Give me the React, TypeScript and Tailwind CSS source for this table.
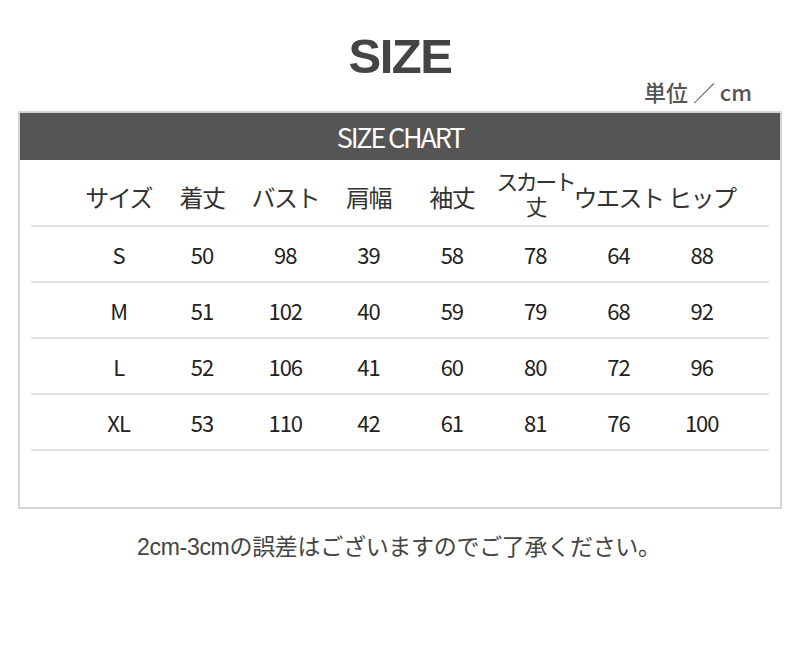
const headers = ['サイズ', '着丈', 'バスト', '肩幅', '袖丈', 'スカート丈', 'ウエスト', 'ヒップ'];

const rows = [
  ['S', '50', '98', '39', '58', '78', '64', '88'],
  ['M', '51', '102', '40', '59', '79', '68', '92'],
  ['L', '52', '106', '41', '60', '80', '72', '96'],
  ['XL', '53', '110', '42', '61', '81', '76', '100'],
];

export default function App() {
  return (
    <div className="w-[800px] h-[646px] bg-white text-[#444] font-['Liberation_Sans','Noto_Sans_CJK_JP',sans-serif]">
      {/* title */}
      <div className="pt-[28px] flex justify-center">
        <h1 className="text-[49px] font-bold leading-[56px] text-[#444] tracking-[-1.5px]">SIZE</h1>
      </div>
      <div className="flex justify-end pr-[48px] -mt-[7px] h-[28px]">
        <span className="text-[22px] leading-[28px] font-medium text-[#555] font-['Noto_Sans_CJK_JP',sans-serif]">単位 ／ cm</span>
      </div>

      {/* chart box */}
      <div className="mx-[18px] mt-[6px] border-2 border-[#d4d4d4] h-[398px] font-['Noto_Sans_CJK_JP',sans-serif]">
        <div className="h-[47px] bg-[#555] flex items-center justify-center">
          <span className="text-white text-[27px] tracking-[-2.2px] leading-none">SIZE CHART</span>
        </div>
        <div className="mx-[11px]">
          <div className="h-[67px] pt-[8px] border-b-2 border-[#e2e2e2] grid grid-cols-[repeat(8,83.3px)] pl-[46px] items-center">
            {headers.map((h) => (
              <div key={h} className="flex justify-center text-center text-[24px] leading-[25px] text-[#333] tracking-[-1.5px] whitespace-nowrap">
                {h === 'スカート丈' ? (
                  <span className="-mt-[8px] text-[22px] tracking-[-2.5px]">スカート<br />丈</span>
                ) : (
                  h
                )}
              </div>
            ))}
          </div>
          {rows.map((r) => (
            <div key={r[0]} className="h-[56px] border-b-2 border-[#e2e2e2] grid grid-cols-[repeat(8,83.3px)] pl-[46px] items-center">
              {r.map((c, i) => (
                <div key={i} className="text-center text-[22px] text-[#222] tracking-[-1px]">{c}</div>
              ))}
            </div>
          ))}
        </div>
      </div>

      <div className="mt-[25px] pl-[137px] text-[23px] leading-[26px] text-[#444] tracking-[-0.3px]">
        2cm-3cmの誤差はございますのでご了承ください。
      </div>
    </div>
  );
}
